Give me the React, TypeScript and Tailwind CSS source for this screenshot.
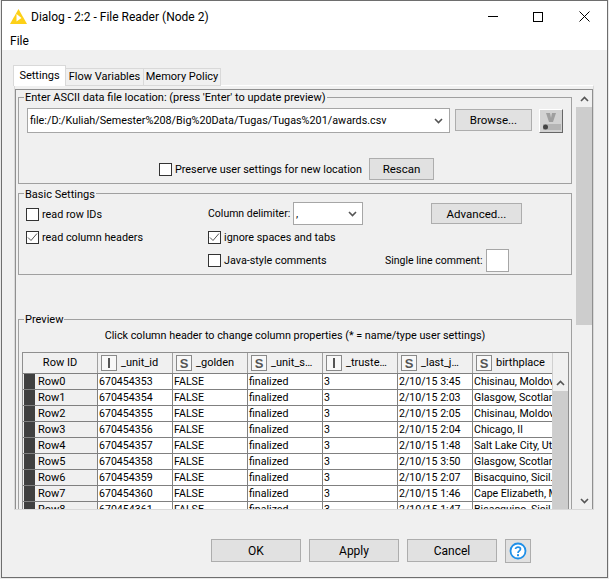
const FONT = "font-['Roboto',sans-serif]";

const HEADERS: [string, string, string][] = [
  ["I", "_unit_id", "w-[75px] border-r"],
  ["S", "_golden", "w-[75px] border-r"],
  ["S", "_unit_s…", "w-[75px] border-r"],
  ["I", "_truste…", "w-[75px] border-r"],
  ["S", "_last_j…", "w-[75px] border-r"],
  ["S", "birthplace", "w-[79px]"],
];

const ROWS = [
  ["Row0", "670454353", "FALSE", "finalized", "3", "2/10/15 3:45", "Chisinau, Moldova"],
  ["Row1", "670454354", "FALSE", "finalized", "3", "2/10/15 2:03", "Glasgow, Scotland"],
  ["Row2", "670454355", "FALSE", "finalized", "3", "2/10/15 2:05", "Chisinau, Moldova"],
  ["Row3", "670454356", "FALSE", "finalized", "3", "2/10/15 2:04", "Chicago, Il"],
  ["Row4", "670454357", "FALSE", "finalized", "3", "2/10/15 1:48", "Salt Lake City, Utah"],
  ["Row5", "670454358", "FALSE", "finalized", "3", "2/10/15 3:50", "Glasgow, Scotland"],
  ["Row6", "670454359", "FALSE", "finalized", "3", "2/10/15 2:07", "Bisacquino, Sicil."],
  ["Row7", "670454360", "FALSE", "finalized", "3", "2/10/15 1:46", "Cape Elizabeth, ME"],
  ["Row8", "670454361", "FALSE", "finalized", "3", "2/10/15 1:47", "Bisacquino, Sicil."],
];

function Check({ on, label, className }: { on?: boolean; label: string; className?: string }) {
  return (
    <div className={"flex items-center gap-[3px] h-[14px] shrink-0 " + (className || "")}>
      <span className="w-[13px] h-[13px] shrink-0 border border-[#333] bg-white flex items-center justify-center">
        {on && (
          <svg width="11" height="11" viewBox="0 0 11 11" fill="none" stroke="#555" strokeWidth="1">
            <path d="M1 5.5 L4 8.5 L10 1.5" />
          </svg>
        )}
      </span>
      <span className="whitespace-nowrap text-[10.8px] mt-px">{label}</span>
    </div>
  );
}

function Btn({ label, className }: { label: string; className: string }) {
  return (
    <div className={"flex items-center justify-center shrink-0 border border-[#adadad] bg-[#e1e1e1] " + className}>
      {label}
    </div>
  );
}

function Chevron({ up, className }: { up?: boolean; className?: string }) {
  return (
    <svg width="9" height="6" viewBox="0 0 9 6" fill="none" stroke="#555" strokeWidth="1.6" className={className}>
      <path d={up ? "M1 5 L4.5 1.5 L8 5" : "M1 1 L4.5 4.5 L8 1"} />
    </svg>
  );
}

function TypeIcon({ t }: { t: string }) {
  return (
    <span className="w-[16px] h-[16px] shrink-0 border border-[#8a8a8a] bg-[#f8f8f8] flex items-center justify-center font-['Liberation_Sans',sans-serif] font-bold text-[13px] text-[#555] leading-none">
      {t === "I" ? <span className="w-[2px] h-[10px] bg-[#555]" /> : t}
    </span>
  );
}

export default function App() {
  return (
    <div className={"w-[609px] h-[579px] bg-[#e9e9e9] overflow-hidden text-[11px] leading-[16px] text-black " + FONT}>
      <div className="w-[607px] h-[578px] ml-px border border-[#6e6e6e] flex flex-col bg-[#f0f0f0]">
        {/* title bar */}
        <div className="h-[31px] shrink-0 bg-white flex items-center pl-[8px]">
          <svg width="17" height="15" viewBox="0 0 17 15" className="mr-[4px]">
            <path d="M8.5 0 L17 15 L0 15 Z" fill="#fdd017" />
            <path d="M6.5 5 L11.5 9 L6.5 12.5 Z" fill="#fff" />
          </svg>
          <span className="text-[12px]">Dialog - 2:2 - File Reader (Node 2)</span>
          <div className="ml-auto flex items-center">
            <span className="w-[10px] h-px bg-black mr-[35px]" />
            <span className="w-[10px] h-[10px] border border-black mr-[36px]" />
            <svg width="11" height="11" viewBox="0 0 11 11" stroke="#000" strokeWidth="1" className="mr-[17px]">
              <path d="M0.5 0.5 L10.5 10.5 M10.5 0.5 L0.5 10.5" />
            </svg>
          </div>
        </div>
        {/* menu */}
        <div className="h-[18px] shrink-0 bg-white pl-[8px] flex items-center text-[12px]">File</div>

        {/* tabs */}
        <div className="flex items-end pl-[11px] h-[36px] shrink-0 -mb-px relative">
          <div className="w-[53px] h-[21px] border border-b-0 border-[#d9d9d9] bg-white -mr-px pb-px flex items-center justify-center relative z-10 whitespace-nowrap">Settings</div>
          <div className="w-[79px] h-[18px] border border-[#d9d9d9] flex items-center justify-center whitespace-nowrap">Flow Variables</div>
          <div className="w-[77px] h-[18px] border border-l-0 border-[#d9d9d9] flex items-center justify-center whitespace-nowrap">Memory Policy</div>
        </div>

        {/* tab panel */}
        <div className="ml-[12px] w-[580px] h-[425px] shrink-0 border border-t-white border-x-[#d9d9d9] border-b-[#d9d9d9] pt-[3px]">
          <div className="h-[420px] border-t border-x border-[#8f8f8f] flex overflow-hidden">
            <div className="w-[560px] shrink-0 pl-[2px] pt-[7px] h-full overflow-hidden">
              {/* file location */}
              <fieldset className="w-[554px] h-[87px] border border-[#a0a0a0] relative">
                <span className="absolute left-[5px] top-[-8px] bg-[#f0f0f0] px-px whitespace-nowrap">
                  Enter ASCII data file location: (press 'Enter' to update preview)
                </span>
                <div className="flex items-start pl-[8px] pt-[10px]">
                  <div className="w-[423px] h-[25px] border border-[#a6a6a6] bg-white flex items-center pl-[2px] pr-[6px] justify-between">
                    <span className="whitespace-nowrap text-[10.8px]">file:/D:/Kuliah/Semester%208/Big%20Data/Tugas/Tugas%201/awards.csv</span>
                    <Chevron />
                  </div>
                  <Btn label="Browse..." className="w-[77px] h-[22px] ml-[5px] mt-px text-[11.5px]" />
                  <div className="w-[24px] h-[24px] ml-[7px] mt-px border border-[#666] border-l-white border-t-white bg-[#d2d2d2] flex flex-col items-center pt-[2px]">
                    <svg width="20" height="19" viewBox="0 0 20 19">
                      <path d="M5 1 L9 1 L10 6 L11 1 L15 1 L12 10 L8 10 Z" fill="#9f9f9f" />
                      <rect x="2" y="12" width="18" height="6" fill="#b5b5b5" />
                      <circle cx="4.5" cy="15" r="2.5" fill="#444" />
                    </svg>
                  </div>
                </div>
                <div className="flex items-center pl-[140px] mt-[25px]">
                  <Check label="Preserve user settings for new location" className="w-[210px]" />
                  <Btn label="Rescan" className="w-[65px] h-[22px] text-[11.5px]" />
                </div>
              </fieldset>

              {/* basic settings */}
              <fieldset className="w-[554px] h-[82px] mt-[9px] border border-[#a0a0a0] relative">
                <span className="absolute left-[5px] top-[-7px] bg-[#f0f0f0] px-px">Basic Settings</span>
                <div className="grid grid-cols-[182px_1fr] pl-[7px] pt-[8px]">
                  <div className="flex flex-col gap-[9px] pt-[5px]">
                    <Check label="read row IDs" />
                    <Check on label="read column headers" />
                  </div>
                  <div>
                    <div className="flex items-center h-[23px]">
                      <span className="whitespace-nowrap w-[85px] shrink-0 text-[10.5px]">Column delimiter:</span>
                      <div className="w-[70px] h-[23px] shrink-0 border border-[#a6a6a6] bg-white flex items-center justify-between pl-[2px] pr-[5px]">
                        <span>,</span>
                        <Chevron />
                      </div>
                      <Btn label="Advanced..." className="w-[91px] h-[21px] ml-[68px] text-[11.5px]" />
                    </div>
                    <Check on label="ignore spaces and tabs" className="mt-[5px]" />
                    <div className="flex items-center mt-[9px] h-[14px]">
                      <Check label="Java-style comments" className="w-[177px]" />
                      <span className="w-[97px] shrink-0 whitespace-nowrap text-[10.5px] mt-px">Single line comment:</span>
                      <span className="w-[23px] h-[23px] ml-[4px] border border-[#a6a6a6] bg-white shrink-0" />
                    </div>
                  </div>
                </div>
              </fieldset>

              {/* preview */}
              <fieldset className="w-[554px] h-[240px] mt-[44px] border border-[#a0a0a0] relative">
                <span className="absolute left-[5px] top-[-8px] bg-[#f0f0f0] px-px">Preview</span>
                <p className="text-center h-[16px] mt-[8px] text-[10.8px]">Click column header to change column properties (* = name/type user settings)</p>
                <div className="w-[547px] h-[200px] ml-[3px] mt-[8px] border border-[#8f8f8f] flex overflow-hidden bg-white text-[10.6px]">
                  <div className="w-[529px] shrink-0">
                    <div className="flex h-[21px] bg-[#f0f0f0] border-b border-[#808080] text-[11px]">
                      <div className="w-[75px] shrink-0 border-r border-[#a0a0a0] flex items-center justify-center">Row ID</div>
                      {HEADERS.map(([t, name, w]) => (
                        <div key={name} className={w + " shrink-0 flex items-center gap-[4px] pl-[3px] border-[#a0a0a0] whitespace-nowrap overflow-hidden"}>
                          <TypeIcon t={t} />
                          <span>{name}</span>
                        </div>
                      ))}
                    </div>
                    {ROWS.map((r) => (
                      <div key={r[0]} className="flex h-[16px] border-b border-[#808080] leading-[15px]">
                        <div className="w-[75px] shrink-0 flex bg-[#f0f0f0] border-r border-[#808080] text-[11px]">
                          <span className="w-[11px] ml-px bg-[#404040] mr-[3px]" />
                          {r[0]}
                        </div>
                        {r.slice(1).map((c, i) => (
                          <div key={i} className={(i === 5 ? "w-[79px]" : "w-[75px] border-r border-[#808080]") + " shrink-0 pl-px whitespace-nowrap overflow-hidden"}>
                            {c}
                          </div>
                        ))}
                      </div>
                    ))}
                  </div>
                  <div className="w-[16px] bg-[#f0f0f0] flex flex-col items-center border-l border-[#d0d0d0]">
                    <div className="h-[21px] w-full" />
                    <div className="h-[17px] flex items-center"><Chevron up /></div>
                    <div className="w-full h-[120px] bg-[#cdcdcd]" />
                  </div>
                </div>
              </fieldset>
            </div>

            {/* outer scrollbar */}
            <div className="w-[16px] shrink-0 flex flex-col items-center">
              <div className="h-[17px] flex items-center"><Chevron up /></div>
              <div className="w-full h-[218px] bg-[#cdcdcd]" />
              <div className="mt-auto h-[17px] flex items-center"><Chevron /></div>
            </div>
          </div>
        </div>

        {/* footer */}
        <div className="flex items-start pl-[209px] pt-[29px] gap-[8px] text-[12px]">
          <Btn label="OK" className="w-[90px] h-[23px]" />
          <Btn label="Apply" className="w-[90px] h-[23px]" />
          <Btn label="Cancel" className="w-[90px] h-[23px]" />
          <div className="w-[26px] h-[24px] border border-[#adadad] bg-[#e1e1e1] flex items-center justify-center">
            <svg width="18" height="18" viewBox="0 0 18 18" fill="none">
              <circle cx="9" cy="9" r="7.5" fill="#fff" stroke="#1e8fe8" strokeWidth="1.8" />
              <path d="M6.5 7 C6.5 4.5 11.5 4.5 11.5 7 C11.5 9 9 8.8 9 11" stroke="#1e8fe8" strokeWidth="1.7" />
              <rect x="8" y="12.2" width="2" height="2" fill="#1e8fe8" />
            </svg>
          </div>
        </div>
      </div>
    </div>
  );
}
